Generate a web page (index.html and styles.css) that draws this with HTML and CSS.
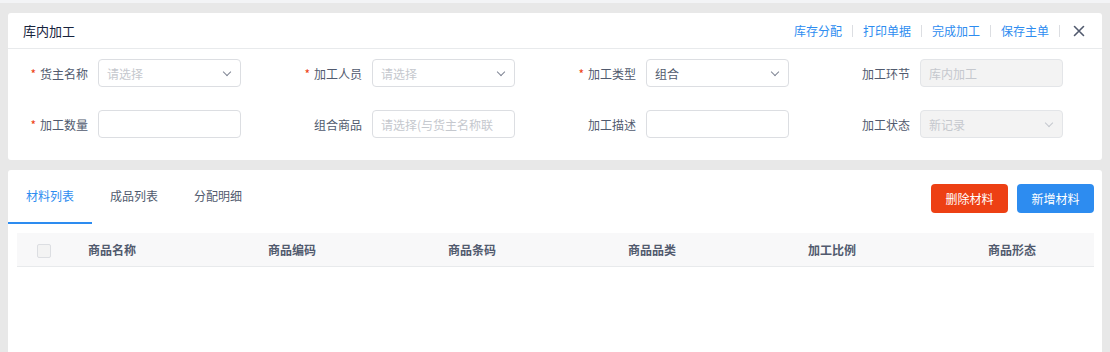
FILE: index.html
```html
<!DOCTYPE html>
<html lang="zh-CN">

<head>
    <meta charset="UTF-8">
    <meta name="viewport" content="width=device-width, initial-scale=1.0">
    <title>库内加工</title>
    <link rel="stylesheet" href="styles.css">
</head>

<body>
    <div class="topbar"></div>

    <div class="page">
        <div class="card form-card">
            <div class="card-head">
                <span class="card-title">库内加工</span>
                <div class="actions">
                    <a href="#">库存分配</a><i class="sep"></i>
                    <a href="#">打印单据</a><i class="sep"></i>
                    <a href="#">完成加工</a><i class="sep"></i>
                    <a href="#">保存主单</a><i class="sep"></i>
                    <button class="close" title="关闭">
                        <svg width="12" height="12" viewBox="0 0 12 12">
                            <path d="M1.5 1.5 L10.5 10.5 M10.5 1.5 L1.5 10.5" stroke="#515a6e" stroke-width="1.6" fill="none" stroke-linecap="round" />
                        </svg>
                    </button>
                </div>
            </div>

            <div class="form-grid">
                <div class="field">
                    <label class="req">货主名称</label>
                    <div class="input select"><span class="ph">请选择</span><i class="arrow"></i></div>
                </div>
                <div class="field">
                    <label class="req">加工人员</label>
                    <div class="input select"><span class="ph">请选择</span><i class="arrow"></i></div>
                </div>
                <div class="field">
                    <label class="req">加工类型</label>
                    <div class="input select"><span class="val">组合</span><i class="arrow"></i></div>
                </div>
                <div class="field">
                    <label>加工环节</label>
                    <div class="input disabled"><span class="ph">库内加工</span></div>
                </div>

                <div class="field">
                    <label class="req">加工数量</label>
                    <div class="input"></div>
                </div>
                <div class="field">
                    <label>组合商品</label>
                    <div class="input"><span class="ph">请选择(与货主名称联</span></div>
                </div>
                <div class="field">
                    <label>加工描述</label>
                    <div class="input"></div>
                </div>
                <div class="field">
                    <label>加工状态</label>
                    <div class="input select disabled"><span class="ph">新记录</span><i class="arrow"></i></div>
                </div>
            </div>
        </div>

        <div class="card list-card">
            <div class="tabbar">
                <div class="tabs">
                    <span class="tab active">材料列表</span>
                    <span class="tab">成品列表</span>
                    <span class="tab">分配明细</span>
                </div>
                <div class="btns">
                    <button class="btn btn-red">删除材料</button>
                    <button class="btn btn-blue">新增材料</button>
                </div>
            </div>

            <div class="table-wrap">
                <table>
                    <colgroup>
                        <col class="c-check">
                        <col class="c-col">
                        <col class="c-col">
                        <col class="c-col">
                        <col class="c-col">
                        <col class="c-col">
                        <col class="c-col">
                    </colgroup>
                    <thead>
                        <tr>
                            <th class="check-cell"><span class="checkbox"></span></th>
                            <th>商品名称</th>
                            <th>商品编码</th>
                            <th>商品条码</th>
                            <th>商品品类</th>
                            <th>加工比例</th>
                            <th>商品形态</th>
                        </tr>
                    </thead>
                    <tbody></tbody>
                </table>
            </div>
        </div>
    </div>
</body>

</html>
```

FILE: styles.css
```css
* {
    padding: 0;
    margin: 0;
    box-sizing: border-box;
}

body {
    font-family: "Noto Sans CJK SC", "Microsoft YaHei", sans-serif;
    font-size: 12px;
    color: #515a6e;
    background-color: #e8e8e8;
}

.topbar {
    height: 3px;
    background-color: #f3f4f6;
}

.page {
    display: flex;
    flex-direction: column;
    gap: 10px;
    padding: 10px 8px 0;
}

.card {
    background: #fff;
    border-radius: 3px;
}

/* header of the form card */
.card-head {
    height: 36px;
    display: flex;
    align-items: center;
    justify-content: space-between;
    padding: 0 17px 0 15px;
    border-bottom: 1px solid #e8eaec;
}

.card-title {
    font-size: 13px;
    color: #17233d;
}

.actions {
    display: flex;
    align-items: center;
}

.actions a {
    color: #2d8cf0;
    text-decoration: none;
}

.sep {
    width: 1px;
    height: 12px;
    background-color: #dcdee2;
    margin: 0 10px;
}

.close {
    border: none;
    background: none;
    width: 12px;
    height: 12px;
    margin-left: 3px;
    display: flex;
    cursor: pointer;
}

/* form */
.form-grid {
    display: grid;
    grid-template-columns: repeat(3, 274px) 1fr;
    row-gap: 23px;
    padding: 10px 0 22px 16px;
}

.field {
    display: flex;
    align-items: center;
}

.field label {
    width: 74px;
    flex-shrink: 0;
    text-align: right;
    padding-right: 10px;
    color: #515a6e;
}

.field label.req::before {
    content: "*";
    color: #ed4014;
    margin-right: 4px;
}

.input {
    width: 143px;
    height: 28px;
    border: 1px solid #dcdee2;
    border-radius: 4px;
    padding: 0 8px;
    display: flex;
    align-items: center;
    justify-content: space-between;
    white-space: nowrap;
    overflow: hidden;
}

.input .ph {
    color: #c5c8ce;
}

.input .val {
    color: #515a6e;
}

.input.disabled {
    background-color: #f3f3f3;
    border-color: #e3e5e8;
}

.arrow {
    width: 6px;
    height: 6px;
    border-right: 1px solid #808695;
    border-bottom: 1px solid #808695;
    transform: rotate(45deg);
    margin: 0 2px 3px 0;
}

.input.disabled .arrow {
    border-color: #c5c8ce;
}

/* list card */
.list-card {
    min-height: 190px;
}

.tabbar {
    display: flex;
    justify-content: space-between;
    align-items: flex-start;
    padding-right: 8px;
}

.tabs {
    display: flex;
}

.tab {
    padding: 0 18px;
    line-height: 52px;
    border-bottom: 2px solid transparent;
    color: #515a6e;
    cursor: pointer;
}

.tab.active {
    color: #2d8cf0;
    border-bottom-color: #2d8cf0;
}

.btns {
    display: flex;
    gap: 9px;
    margin-top: 14px;
}

.btn {
    width: 77px;
    height: 29px;
    border: none;
    border-radius: 4px;
    color: #fff;
    font-family: inherit;
    font-size: 12px;
    cursor: pointer;
}

.btn-red {
    background-color: #ed4014;
}

.btn-blue {
    background-color: #2d8cf0;
}

.table-wrap {
    margin: 9px 8px 0 9px;
    overflow: hidden;
}

table {
    width: 1134px;
    table-layout: fixed;
    border-collapse: collapse;
}

.c-check {
    width: 54px;
}

.c-col {
    width: 180px;
}

th {
    height: 33px;
    background-color: #f8f8f9;
    border-bottom: 1px solid #e8eaec;
    text-align: left;
    padding-left: 17px;
    font-weight: bold;
    color: #515a6e;
    white-space: nowrap;
}

th.check-cell {
    padding: 0;
    text-align: center;
}

.checkbox {
    display: inline-block;
    width: 14px;
    height: 14px;
    border: 1px solid #dcdee2;
    border-radius: 2px;
    background-color: #f3f3f3;
    vertical-align: middle;
}
```
